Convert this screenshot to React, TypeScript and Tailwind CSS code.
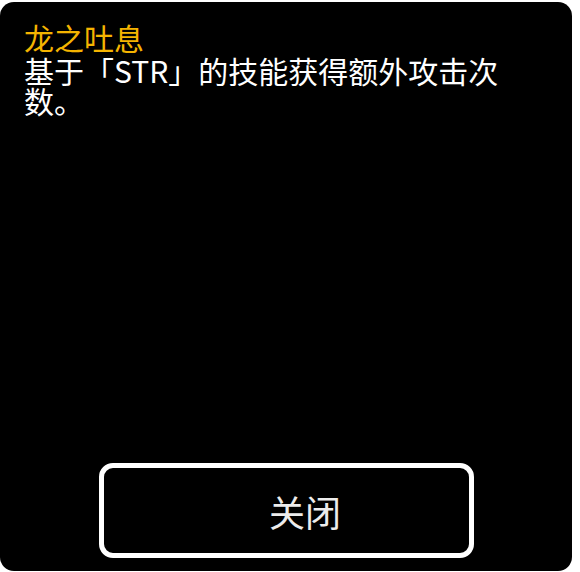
export default function App() {
  return (
    <div className="w-[580px] h-[572px] bg-white overflow-hidden">
      <div className="mt-[2px] w-[572px] h-[569px] rounded-[14px] bg-black flex flex-col">
        <div
          className="pt-[20px] px-[24px] w-[540px] text-[30px] leading-[30px]"
          style={{ fontFamily: '"Noto Sans CJK SC", "Noto Sans", sans-serif' }}
        >
          <div className="text-[#f5b400] mb-[3px]">龙之吐息</div>
          <div className="text-white">基于「STR」的技能获得额外攻击次数。</div>
        </div>
        <div className="mt-auto mb-[13px] flex justify-center">
          <button
            className="w-[375px] h-[95px] rounded-[14px] border-[5px] border-white bg-black flex items-center justify-center pl-[38px] text-[36px] text-[#ececec]"
            style={{ fontFamily: '"Noto Sans CJK SC", "Noto Sans", sans-serif' }}
          >
            关闭
          </button>
        </div>
      </div>
    </div>
  );
}
